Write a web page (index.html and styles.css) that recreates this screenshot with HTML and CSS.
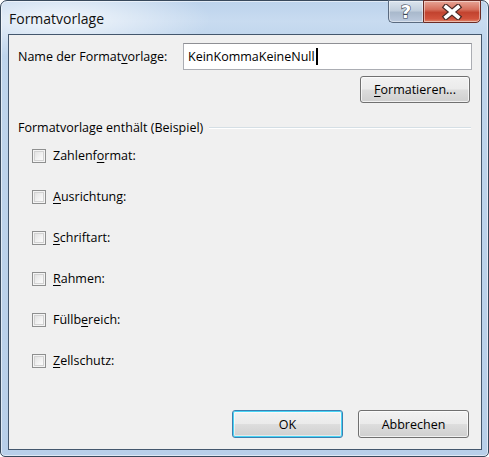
FILE: index.html
```html
<!DOCTYPE html>
<html lang="de">
<head>
<meta charset="utf-8">
<title>Formatvorlage</title>
<link rel="stylesheet" href="styles.css">
</head>
<body>
<div class="window">
  <div class="titlebar">
    <div class="title">Formatvorlage</div>
    <div class="caption">
      <div class="cap-btn help"><span class="q">?</span></div>
      <div class="cap-btn close">
        <svg width="22" height="16" viewBox="0 0 22 16">
          <path d="M5 3 L17 13 M17 3 L5 13" stroke="#4a2a26" stroke-width="6" stroke-linecap="square" fill="none"/>
          <path d="M5 3 L17 13 M17 3 L5 13" stroke="#ffffff" stroke-width="3.6" stroke-linecap="square" fill="none"/>
        </svg>
      </div>
    </div>
  </div>
  <div class="client">
    <div class="name-row">
      <label class="name-label">Name der Format<u>v</u>orlage:</label>
      <div class="textbox"><span class="tb-text">KeinKommaKeineNull</span><span class="caret"></span></div>
    </div>
    <div class="fmt-row">
      <button class="btn fmt-btn"><u>F</u>ormatieren...</button>
    </div>
    <div class="group">
      <div class="group-head"><span class="group-title">Formatvorlage enthält (Beispiel)</span><span class="group-line"></span></div>
      <div class="checks">
        <div class="check"><span class="box"></span><span>Zahlenf<u>o</u>rmat:</span></div>
        <div class="check"><span class="box"></span><span><u>A</u>usrichtung:</span></div>
        <div class="check"><span class="box"></span><span><u>S</u>chriftart:</span></div>
        <div class="check"><span class="box"></span><span><u>R</u>ahmen:</span></div>
        <div class="check"><span class="box"></span><span>Füllb<u>e</u>reich:</span></div>
        <div class="check"><span class="box"></span><span><u>Z</u>ellschutz:</span></div>
      </div>
    </div>
    <div class="buttons">
      <button class="btn default">OK</button>
      <button class="btn">Abbrechen</button>
    </div>
  </div>
</div>
</body>
</html>
```

FILE: styles.css
```css
html, body {
  margin: 0;
  padding: 0;
  background: #ffffff;
}
body {
  width: 489px;
  height: 457px;
  overflow: hidden;
  font-family: "Open Sans", "Noto Sans", "DejaVu Sans", sans-serif;
  font-size: 12.5px;
  color: #000;
}
u { text-decoration: underline; text-underline-offset: 2px; }

.window {
  box-sizing: border-box;
  width: 489px;
  height: 457px;
  border: 1px solid #38495c;
  border-radius: 7px 7px 5px 5px;
  background:
    radial-gradient(ellipse 150px 40px at 60px 18px, rgba(255,255,255,0.75), rgba(255,255,255,0) 100%),
    linear-gradient(to bottom, #bcd3ec 0px, #c8dbf0 20px, #bfd5ec 40px, #b8cfe9 100%);
  box-shadow: inset 0 0 0 1px rgba(255,255,255,0.55);
  display: flex;
  flex-direction: column;
  padding: 0 6px 6px 7px;
}

.titlebar {
  height: 33px;
  flex: none;
  display: flex;
  align-items: flex-start;
  justify-content: space-between;
}
.title {
  font-family: "Open Sans", "Noto Sans", sans-serif;
  font-size: 14px;
  margin: 8px 0 0 1px;
  color: #111;
}
.caption {
  display: flex;
  margin-right: 1px;
  margin-top: -1px;
}
.cap-btn {
  height: 23px;
  box-sizing: border-box;
  border: 1px solid #5a6a7f;
  display: flex;
  align-items: center;
  justify-content: center;
  box-shadow: inset 0 0 0 1px rgba(255,255,255,0.45);
}
.help {
  width: 35px;
  border-right: none;
  border-radius: 0 0 0 5px;
  background: linear-gradient(to bottom, #dbe4ee 0%, #c2cfdd 45%, #a9b9cc 55%, #bccade 100%);
}
.q {
  font-family: "DejaVu Sans", sans-serif;
  font-weight: bold;
  font-size: 18px;
  line-height: 18px;
  color: #ffffff;
  -webkit-text-stroke: 1.2px #3b4756;
  paint-order: stroke fill;
}
.close {
  width: 58px;
  border-color: #6b2b24;
  border-radius: 0 0 5px 0;
  background: linear-gradient(to bottom, #e7a596 0%, #d6705d 40%, #c2432f 55%, #d2533d 85%, #e08a6e 100%);
}

.client {
  flex: 1;
  border: 1px solid #44576d;
  background: #f0f0f0;
  display: flex;
  flex-direction: column;
  padding: 0 8px 0 9px;
}

.name-row {
  display: flex;
  align-items: center;
  margin-top: 8px;
  justify-content: space-between;
}
.textbox {
  box-sizing: border-box;
  width: 289px;
  height: 27px;
  background: #fff;
  border: 1px solid #abadb3;
  border-top-color: #8e8f94;
  display: flex;
  align-items: center;
  padding-left: 4px;
  margin-right: 1px;
}
.caret {
  display: inline-block;
  width: 2px;
  height: 17px;
  background: #000;
  margin-left: 1px;
}

.btn {
  box-sizing: border-box;
  height: 28px;
  width: 111px;
  font-family: "Open Sans", "Noto Sans", sans-serif;
  font-size: 12.5px;
  color: #000;
  border: 1px solid #707070;
  border-radius: 3px;
  background: linear-gradient(to bottom, #f2f2f2 0%, #ebebeb 48%, #dddddd 52%, #cfcfcf 100%);
  box-shadow: inset 0 0 0 1px rgba(255,255,255,0.7);
  padding: 0;
}
.fmt-row {
  display: flex;
  justify-content: flex-end;
  margin-top: 6px;
  padding-right: 3px;
}
.fmt-btn { height: 27px; width: 110px; }

.group {
  margin-top: 16px;
}
.group-head {
  display: flex;
  align-items: center;
}
.group-line {
  flex: 1;
  height: 0;
  border-top: 1px solid #d5dfe5;
  border-bottom: 1px solid #ffffff;
  margin-left: 6px;
  margin-right: 2px;
}
.checks {
  display: flex;
  flex-direction: column;
  gap: 22px;
  margin-top: 10px;
  margin-left: 14px;
}
.check {
  display: flex;
  align-items: center;
  gap: 7px;
  height: 19px;
}
.box {
  box-sizing: border-box;
  width: 14px;
  height: 14px;
  border: 1px solid #8e8f8f;
  background: linear-gradient(135deg, #dcdcdc 0%, #f4f4f4 60%, #ffffff 100%);
  box-shadow: inset 0 0 0 1px #f4f4f4, inset 0 0 0 2px #d2d2d2;
}

.buttons {
  margin-top: auto;
  margin-bottom: 11px;
  display: flex;
  justify-content: flex-end;
  gap: 15px;
  padding-right: 4px;
}
.btn.default {
  border-color: #3c7fb1;
  box-shadow: inset 0 0 0 1px #48d4f5, inset 0 0 0 2px rgba(255,255,255,0.5);
}
```
